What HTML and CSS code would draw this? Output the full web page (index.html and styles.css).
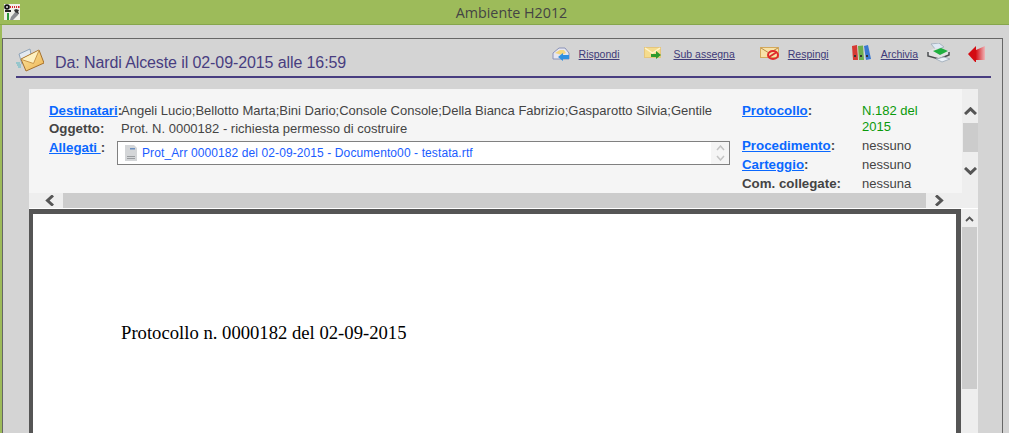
FILE: index.html
```html
<!DOCTYPE html>
<html lang="it">

<head>
	<meta charset="UTF-8">
	<title>Ambiente H2012</title>
	<link rel="stylesheet" href="styles.css">
</head>

<body>
	<div class="titlebar">
		<svg class="app-icon" width="16" height="16" viewBox="0 0 16 16">
			<rect width="16" height="16" fill="#f0f0ea" />
			<circle cx="3" cy="3" r="2.800" fill="#111" />
			<circle cx="3" cy="3" r="1.100" fill="#ddd" />
			<path d="M6 2h1v2H6zM8 2h1v2H8zM10 2h1v2h-1zM12 2h1v2h-1zM14 2h1.500v2H14z" fill="#d8262a" />
			<rect x="3" y="9" width="2" height="7" fill="#2a9a3c" />
			<path d="M1 6h6v2H1z" fill="#222" />
			<path d="M6 16l1-3 5-6 2 1 1 1-1 2-5 5z" fill="#8a8c90" />
			<path d="M10 6l2-1 3 1-1 2 1 2-2-1-2-1z" fill="#333" />
		</svg>
		<div class="app-title">Ambiente H2012</div>
	</div>

	<div class="panel">
		<div class="msg-header">
			<svg class="mail-icon" width="28" height="24" viewBox="0 0 28 24">
				<defs>
					<linearGradient id="mailfill" x1="0" y1="0" x2="1" y2="1">
						<stop offset="0" stop-color="#fbe6a4" />
						<stop offset="1" stop-color="#eeb552" />
					</linearGradient>
				</defs>
				<path d="M3 6l11-5 2 11-10 4z" fill="#e3e9f0" stroke="#8ea3b8" stroke-width="1" />
				<path d="M0 15h4M1 17h4M2 19h3" stroke="#58b8c4" stroke-width="1" />
				<path d="M5 11L23 2l5 13-18 8z" fill="url(#mailfill)" stroke="#a5702c" stroke-width="1" />
				<path d="M5.500 11.500l12 4 5.500-13" fill="#fdf0c0" stroke="#c8964a" stroke-width="1" />
			</svg>
			<div class="msg-title">Da: Nardi Alceste il 02-09-2015 alle 16:59</div>
			<div class="actions">
				<a class="action" href="#">
					<svg class="icon-reply" width="18" height="14" viewBox="0 0 18 14">
						<path d="M1 6l6-5h6l4 5v6H1z" fill="#e6e6f0" stroke="#8a92b8" stroke-width="1" />
						<path d="M3 6l5-3h4l2 3-4 2z" fill="#f3d67d" />
						<path d="M6 10l5-4v2h6v4h-6v2z" fill="#2f8fe0" />
					</svg>
					Rispondi
				</a>
				<a class="action" href="#">
					<svg class="icon-sub" width="20" height="14" viewBox="0 0 20 14">
						<rect x="0.500" y="0.500" width="16" height="10" fill="#f5dc8e" stroke="#e6c67c" stroke-width="1" />
						<path d="M1 1l7.500 5L16 1" fill="none" stroke="#fff4cc" stroke-width="1.500" />
						<path d="M7 7h5V4l5 4-5 4V10H7z" fill="#2e9a2e" />
					</svg>
					Sub assegna
				</a>
				<a class="action" href="#">
					<svg class="icon-rej" width="19" height="14" viewBox="0 0 19 14">
						<rect x="0.500" y="0.500" width="18" height="10" fill="#f8e2a8" stroke="#d4a95c" stroke-width="1" />
						<path d="M1 1l8 5 9-5" fill="none" stroke="#b88b48" stroke-width="1" />
						<ellipse cx="13" cy="8" rx="5" ry="4" fill="none" stroke="#e02b2b" stroke-width="2" />
						<path d="M9 10l8-5" stroke="#e02b2b" stroke-width="2" />
					</svg>
					Respingi
				</a>
				<a class="action" href="#">
					<svg class="icon-arch" width="20" height="16" viewBox="0 0 20 16">
						<path d="M0 1l5-1 1 15H1z" fill="#d63a34" />
						<path d="M6 1l5-.5 1 14.500H7z" fill="#6cae4c" />
						<path d="M12 1l4-1 3 14-5 1z" fill="#3a78d0" />
						<path d="M2 10h2v2H2zM8 10h2v2H8zM14 10h2v2h-2z" fill="#333" />
					</svg>
					Archivia
				</a>
				<svg class="icon-print" width="24" height="20" viewBox="0 0 24 20">
					<path d="M4 1l8-1 5 4-8 3z" fill="#dfe9f4" stroke="#a8b4c0" stroke-width="1" />
					<path d="M1 8l8-3 13 3v4l-10 4L1 13z" fill="#e2e3e4" />
					<path d="M6 8l8-3 7 3-8 4z" fill="#20b040" />
					<path d="M1 9v4l11 3 10-4V9" fill="none" stroke="#4a4d50" stroke-width="1.500" />
					<path d="M9 16l8-2 6 2-8 3z" fill="#eaf1f8" stroke="#a8b4c0" stroke-width="1" />
				</svg>
				<svg class="icon-back" width="18" height="17" viewBox="0 0 18 17">
					<defs>
						<linearGradient id="backfade">
							<stop offset="0.450" stop-color="#d40c12" />
							<stop offset="1" stop-color="#eeb4b8" />
						</linearGradient>
					</defs>
					<path d="M0 9l8-8v4l9-4v14l-9 0v3z" fill="url(#backfade)" />
				</svg>
			</div>
		</div>

		<div class="msg-wrap">
			<div class="info-row">
				<div class="info">
					<div class="info-left">
						<div class="label label-first"><a href="#">Destinatari</a>:</div>
						<div class="value label-first">Angeli Lucio;Bellotto Marta;Bini Dario;Console Console;Della Bianca Fabrizio;Gasparotto Silvia;Gentile</div>
						<div class="label">Oggetto:</div>
						<div class="value">Prot. N. 0000182 - richiesta permesso di costruire</div>
						<div class="label"><a href="#">Allegati </a>:</div>
						<div class="attach-box">
							<svg class="file-icon" width="12" height="16" viewBox="0 0 12 16">
								<path d="M0 0h9l3 3v13H0z" fill="#d4d6d8" />
								<path d="M5 3h5v1.500H5z" fill="#6b8fc0" />
								<path d="M2 11h8v1H2zM2 13h8v1H2z" fill="#9a9da0" />
							</svg>
							<a class="attach-link" href="#">Prot_Arr 0000182 del 02-09-2015 - Documento00 - testata.rtf</a>
							<div class="attach-scroll">
								<svg width="9" height="6" viewBox="0 0 9 6"><path d="M1 5l3.500-4L8 5" fill="none" stroke="#c4c4c4" stroke-width="1.500" /></svg>
								<svg width="9" height="6" viewBox="0 0 9 6"><path d="M1 1l3.500 4L8 1" fill="none" stroke="#c4c4c4" stroke-width="1.500" /></svg>
							</div>
						</div>
					</div>
					<div class="info-right">
						<div class="label"><a href="#">Protocollo</a>:</div>
						<div class="value green">N.182 del 2015</div>
						<div class="label"><a href="#">Procedimento</a>:</div>
						<div class="value">nessuno</div>
						<div class="label"><a href="#">Carteggio</a>:</div>
						<div class="value">nessuno</div>
						<div class="label">Com. collegate:</div>
						<div class="value">nessuna</div>
					</div>
				</div>
				<div class="vscroll">
					<svg class="arrow-up" width="13" height="8" viewBox="0 0 13 8"><path d="M1 7l5.500-5.200L12 7" fill="none" stroke="#555" stroke-width="3" /></svg>
					<div class="vthumb"></div>
					<svg class="arrow-down" width="13" height="8" viewBox="0 0 13 8"><path d="M1 1l5.500 5.200L12 1" fill="none" stroke="#555" stroke-width="3" /></svg>
				</div>
			</div>
			<div class="hscroll">
				<svg width="9" height="11" viewBox="0 0 9 11"><path d="M8 .5L2.500 5.500 8 10.500" fill="none" stroke="#555" stroke-width="3" /></svg>
				<div class="hthumb"></div>
				<svg width="9" height="11" viewBox="0 0 9 11"><path d="M1 .5l5.500 5L1 10.500" fill="none" stroke="#555" stroke-width="3" /></svg>
			</div>
			<div class="doc-row">
				<div class="doc">
					<p class="doc-text">Protocollo n. 0000182 del 02-09-2015</p>
				</div>
				<div class="doc-scroll">
					<svg width="9" height="6" viewBox="0 0 9 6"><path d="M1 5l3.500-3.500L8 5" fill="none" stroke="#555" stroke-width="1.800" /></svg>
					<div class="doc-thumb"></div>
				</div>
			</div>
		</div>
	</div>
</body>

</html>
```

FILE: styles.css
```css
* {
	box-sizing: border-box;
}

html,
body {
	height: 433px;
	overflow: hidden;
}

body {
	margin: 0;
	padding-left: 2px;
	background-color: #d4d4d4;
	font-family: 'Liberation Sans', Arial, sans-serif;
	font-size: 13px;
	color: #444;
	box-shadow: inset 2px 0 0 #9dbb5a;
}

a {
	color: #0a68ff;
}

.titlebar {
	display: flex;
	align-items: center;
	height: 25px;
	margin-left: -2px;
	padding-left: 4px;
	background-color: #9dbb5a;
	border-bottom: 1px solid #86a64c;
}

.app-icon {
	flex: none;
}

.app-title {
	flex: 1;
	padding-right: 6px;
	text-align: center;
	font-family: 'Open Sans', sans-serif;
	font-size: 14.300px;
	color: #444;
}

.panel {
	width: 1001px;
	height: 395px;
	margin-top: 13px;
	padding: 0 11px 0 13px;
	border: 1px solid #666;
	border-bottom: none;
}

.msg-header {
	display: flex;
	height: 39px;
	border-bottom: 2px solid #483d80;
}

.mail-icon {
	flex: none;
	margin-top: 9px;
}

.msg-title {
	margin: 15px 0 0 11px;
	font-size: 16px;
	line-height: 18px;
	letter-spacing: -0.1px;
	color: #483d80;
}

.actions {
	display: flex;
	align-items: flex-start;
	margin-left: auto;
	padding: 7px 5px 0 0;
}

.action {
	display: flex;
	align-items: center;
	gap: 9px;
	margin-right: 25px;
	font-size: 10.500px;
	line-height: 16px;
	color: #3e3a78;
	white-space: nowrap;
}

.action:nth-child(3) {
	margin-right: 23px;
}

.action:nth-child(4) {
	margin-right: 9px;
}

.icon-arch {
	margin-top: -3px;
}

.icon-print {
	flex: none;
	margin-top: -3px;
	margin-right: 17px;
}

.icon-back {
	flex: none;
	margin-top: -1px;
}

.msg-wrap {
	width: 949px;
	margin: 11px 0 0 13px;
}

.info-row {
	display: flex;
	height: 104px;
}

.info {
	display: flex;
	width: 933px;
	padding: 13px 0 0 20px;
	background-color: #f5f5f5;
	line-height: 16px;
}

.info-left {
	display: grid;
	grid-template-columns: 72px 609px;
	grid-auto-rows: min-content;
	width: 693px;
	row-gap: 3px;
}

.info-right {
	display: grid;
	grid-template-columns: 120px 78px;
	grid-auto-rows: min-content;
	row-gap: 3px;
	padding-top: 1px;
}

.label {
	font-size: 13.300px;
	font-weight: bold;
	white-space: nowrap;
}

.label-first {
	padding-top: 1px;
	margin-bottom: -1px;
}

.info-left .value {
	white-space: nowrap;
}

.green {
	color: #0a9a0a;
}

.attach-box {
	display: flex;
	align-items: center;
	height: 24px;
	margin: 1px 0 0 -4px;
	padding-left: 7px;
	background-color: #fff;
	border: 1px solid #808080;
}

.file-icon {
	flex: none;
}

.attach-link {
	flex: 1;
	margin-left: 5px;
	font-size: 12px;
	letter-spacing: 0.1px;
	color: #1a5cff;
	text-decoration: none;
}

.attach-scroll {
	display: flex;
	flex-direction: column;
	align-items: center;
	justify-content: space-between;
	width: 18px;
	height: 100%;
	padding: 3px 0;
	background-color: #f5f5f5;
}

.vscroll {
	display: flex;
	flex-direction: column;
	align-items: center;
	width: 16px;
	padding-top: 18px;
	background-color: #eee;
}

.vthumb {
	flex: none;
	width: 15px;
	height: 29px;
	margin: 8px 0 15px;
	background-color: #ccc;
}

.hscroll {
	display: flex;
	align-items: center;
	height: 16px;
	padding: 0 16px 1px 16px;
	background-color: #eee;
	border-bottom: 1px solid #fff;
}

.hthumb {
	flex: none;
	width: 863px;
	height: 15px;
	margin: 0 9px 0 9px;
	background-color: #ccc;
}

.doc-row {
	display: flex;
	height: 224px;
}

.doc {
	width: 932px;
	padding: 108px 0 0 88px;
	background-color: #fff;
	border: solid #555;
	border-width: 5px 5px 0 4px;
}

.doc-text {
	margin: 0;
	font-family: 'Liberation Serif', 'Times New Roman', serif;
	font-size: 18.670px;
	line-height: 22px;
	color: #000;
}

.doc-scroll {
	display: flex;
	flex-direction: column;
	align-items: center;
	width: 17px;
	padding-top: 7px;
	background-color: #eee;
}

.doc-thumb {
	flex: none;
	width: 15px;
	height: 162px;
	margin-top: 5px;
	background-color: #ccc;
}
```
